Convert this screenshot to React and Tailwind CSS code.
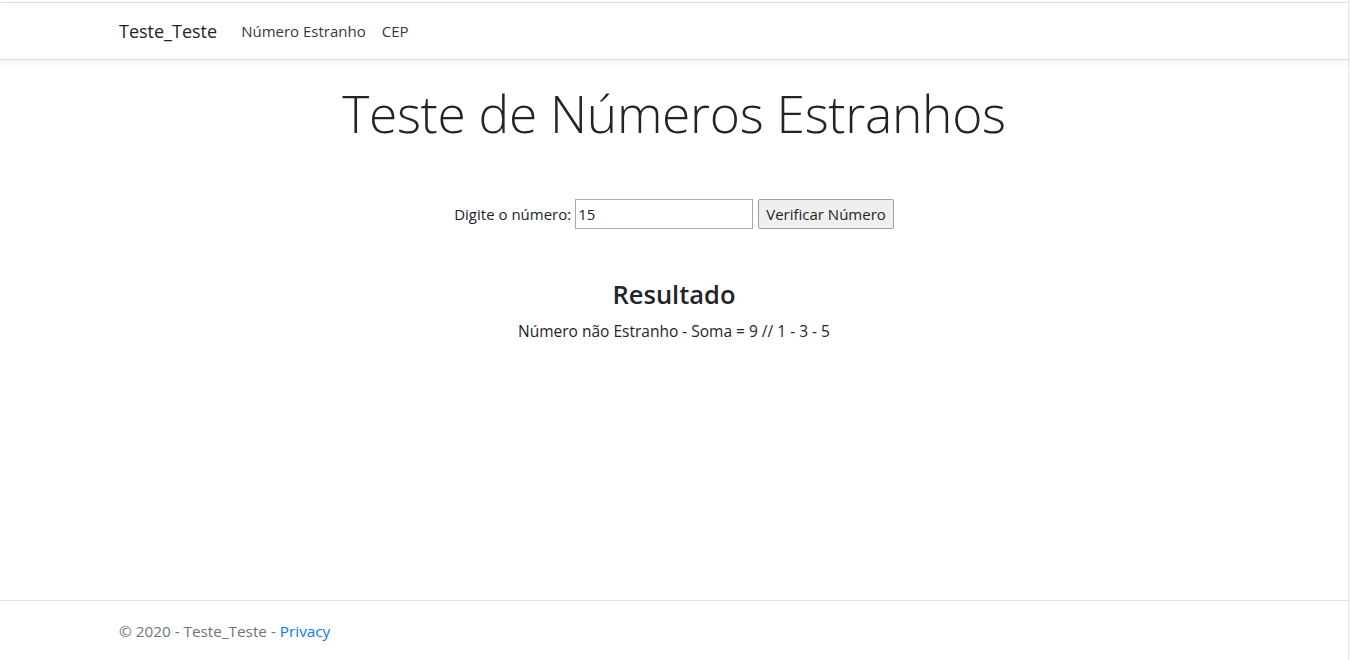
import React, { useState } from "react";

function App() {
  const [numero, setNumero] = useState("15");

  return (
    <div
      className="w-[1349px] h-screen border-r border-[#e6e6e6] pt-[2px] flex flex-col text-[#212529] bg-white"
      style={{ fontFamily: '"Open Sans", "Noto Sans", sans-serif' }}
    >
      {/* Navbar */}
      <header className="border-t border-b border-[#dcdcdc] shadow-[0_4px_8px_rgba(0,0,0,0.05)]">
        <nav className="w-[1140px] mx-auto px-[15px] h-[56px] flex items-center">
          <span className="text-[18px] text-[#212529] mr-[24px] leading-none">Teste_Teste</span>
          <ul className="flex items-center text-[15px] text-[#343a40]">
            <li className="mr-[16px]">Número Estranho</li>
            <li>CEP</li>
          </ul>
        </nav>
      </header>

      {/* Conteúdo */}
      <main className="flex-1 w-[1140px] mx-auto px-[15px] text-center">
        <h1 className="mt-[20px] text-[51.5px] font-light leading-[66px] tracking-[-0.3px]">
          Teste de Números Estranhos
        </h1>

        <form
          className="mt-[53px] flex items-center justify-center text-[15px]"
          onSubmit={(e) => e.preventDefault()}
        >
          <label className="mr-[4px]">Digite o número:</label>
          <input
            value={numero}
            onChange={(e) => setNumero(e.target.value)}
            className="w-[178px] h-[30px] border border-[#a9a9a9] px-[2px] text-[15px] outline-none"
          />
          <button className="ml-[5px] h-[30px] px-[7px] bg-[#efefef] border border-[#a0a0a0] rounded-[2px] text-[15px]">
            Verificar Número
          </button>
        </form>

        <h3 className="mt-[48px] text-[25.5px] font-semibold leading-[34px]">Resultado</h3>
        <p className="mt-[9px] text-[15.5px]">Número não Estranho - Soma = 9 // 1 - 3 - 5</p>
      </main>

      {/* Rodapé */}
      <footer className="border-t border-[#dee2e6] h-[60px]">
        <div className="w-[1140px] mx-auto px-[15px] leading-[60px] text-[15.3px] text-[#6c757d]">
          © 2020 - Teste_Teste - <a className="text-[#007bff]">Privacy</a>
        </div>
      </footer>
    </div>
  );
}

export default App;
